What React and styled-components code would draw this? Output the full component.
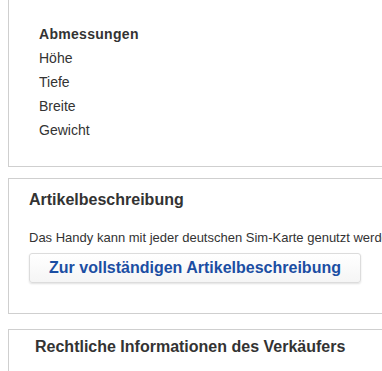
import React from "react";
import styled, { createGlobalStyle } from "styled-components";

const Global = createGlobalStyle`
  html, body { margin: 0; padding: 0; background: #fff; overflow: hidden; }
  body { font-family: "Liberation Sans", Arial, sans-serif; color: #333; }
`;

const Page = styled.div`
  width: 382px;
  height: 371px;
  overflow: hidden;
  padding-left: 8px;
  box-sizing: border-box;
  display: flex;
  flex-direction: column;
`;

const Panel = styled.section`
  width: 440px;
  flex-shrink: 0;
  box-sizing: border-box;
  border: 1px solid #cfcfcf;
  border-top: ${(p) => (p.$open ? "none" : "1px solid #cfcfcf")};
  padding: ${(p) => p.$pad};
  margin-top: ${(p) => p.$gap || 0}px;
`;

const SpecList = styled.dl`
  margin: 0;
  font-size: 14px;
  line-height: 24px;
`;

const SpecTitle = styled.dt`
  font-weight: bold;
  letter-spacing: 0.3px;
`;

const SpecItem = styled.dd`
  margin: 0;
`;

const Heading = styled.h2`
  margin: 0;
  font-size: 16px;
  line-height: 20px;
  font-weight: bold;
  color: #333;
`;

const Description = styled.p`
  margin: 19px 0 0;
  font-size: 13px;
  line-height: 18px;
  white-space: nowrap;
  color: #333;
`;

const MoreButton = styled.button`
  margin-top: 6px;
  width: 332px;
  height: 30px;
  box-sizing: border-box;
  border: 1px solid #dcdcdc;
  border-radius: 3px;
  background: linear-gradient(#ffffff, #f5f5f5);
  box-shadow: 0 1px 2px rgba(0, 0, 0, 0.12);
  font-family: "Liberation Sans", Arial, sans-serif;
  font-size: 16px;
  font-weight: bold;
  line-height: 28px;
  color: #1b4ea3;
  padding: 0;
  text-align: center;
  cursor: pointer;
`;

export default function App() {
  return (
    <>
      <Global />
      <Page>
        <Panel $open $pad="22px 0 24px 30px">
          <SpecList>
            <SpecTitle>Abmessungen</SpecTitle>
            <SpecItem>Höhe</SpecItem>
            <SpecItem>Tiefe</SpecItem>
            <SpecItem>Breite</SpecItem>
            <SpecItem>Gewicht</SpecItem>
          </SpecList>
        </Panel>
        <Panel $gap={11} $pad="11px 0 30px 20px">
          <Heading>Artikelbeschreibung</Heading>
          <Description>
            Das Handy kann mit jeder deutschen Sim-Karte genutzt werden.
          </Description>
          <MoreButton>Zur vollständigen Artikelbeschreibung</MoreButton>
        </Panel>
        <Panel $gap={15} $pad="7px 0 20px 26px">
          <Heading>Rechtliche Informationen des Verkäufers</Heading>
        </Panel>
      </Page>
    </>
  );
}
